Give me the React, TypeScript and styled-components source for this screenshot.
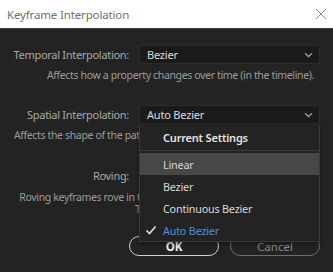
import React from 'react';
import styled, { createGlobalStyle } from 'styled-components';

const GlobalStyle = createGlobalStyle`
  html, body {
    margin: 0;
    padding: 0;
    background: #232323;
  }
  body {
    font-family: "Noto Sans", "Liberation Sans", sans-serif;
  }
`;

const Dialog = styled.div`
  width: 333px;
  height: 272px;
  display: flex;
  flex-direction: column;
  background: #232323;
  overflow: hidden;
  position: relative;
`;

const TitleBar = styled.div`
  height: 29px;
  flex: none;
  display: flex;
  align-items: center;
  justify-content: space-between;
  padding: 0 6px 0 7px;
  background: #ffffff;
  border-bottom: 1px solid #3a3a3a;
  box-sizing: border-box;
`;

const Title = styled.span`
  font-size: 11.5px;
  color: #707070;
  letter-spacing: -0.15px;
`;

const Body = styled.div`
  position: relative;
  flex: 1;
  padding-top: 16px;
  display: flex;
  flex-direction: column;
`;

const Row = styled.div<{ $top?: number }>`
  display: grid;
  grid-template-columns: 129px 181px;
  column-gap: 10px;
  align-items: center;
  margin-top: ${({ $top }) => $top ?? 0}px;
  height: 19px;
`;

const Label = styled.span`
  text-align: right;
  font-size: 11px;
  color: #a8a8a8;
  letter-spacing: -0.3px;
  white-space: nowrap;
`;

const Select = styled.div`
  height: 19px;
  box-sizing: border-box;
  background: #1a1a1a;
  border: 1px solid #2c2c2c;
  border-radius: 2px;
  display: flex;
  align-items: center;
  justify-content: space-between;
  padding: 0 6px 0 7px;
  font-size: 11px;
  color: #dcdcdc;
  letter-spacing: -0.2px;
`;

const Description = styled.div<{ $align: 'right' | 'center'; $right?: number; $top?: number }>`
  font-size: 10.5px;
  color: #9c9c9c;
  letter-spacing: -0.35px;
  text-align: ${({ $align }) => $align};
  padding-right: ${({ $right }) => $right ?? 0}px;
  margin-top: ${({ $top }) => $top ?? 0}px;
  line-height: 12px;
  white-space: nowrap;
`;

const Checkbox = styled.div`
  width: 12px;
  height: 12px;
  border: 1px solid #777;
  border-radius: 2px;
`;

const Buttons = styled.div`
  display: flex;
  gap: 11px;
  margin-top: 21px;
  padding-left: 129px;
`;

const Button = styled.div<{ $primary?: boolean }>`
  width: 90px;
  height: 20px;
  box-sizing: border-box;
  border-radius: 10px;
  border: 1.5px solid ${({ $primary }) => ($primary ? '#d0d0d0' : '#6e6e6e')};
  display: flex;
  align-items: center;
  justify-content: center;
  font-size: 11.5px;
  font-weight: ${({ $primary }) => ($primary ? 700 : 400)};
  color: ${({ $primary }) => ($primary ? '#f0f0f0' : '#8a8a8a')};
`;

const Menu = styled.div`
  position: absolute;
  left: 139px;
  top: 96px;
  width: 181px;
  height: 117px;
  box-sizing: border-box;
  background: #232323;
  border: 1px solid #3a3a3a;
  border-top: none;
  padding-top: 1px;
  display: flex;
  flex-direction: column;
  box-shadow: 0 2px 4px rgba(0, 0, 0, 0.4);
`;

const MenuItem = styled.div<{ $active?: boolean; $checked?: boolean; $header?: boolean }>`
  height: 22px;
  display: flex;
  align-items: center;
  padding-left: 23px;
  position: relative;
  font-size: ${({ $header }) => ($header ? '11px' : '10.8px')};
  font-weight: ${({ $header }) => ($header ? 600 : 400)};
  letter-spacing: -0.2px;
  color: ${({ $checked, $header }) => ($checked ? '#4a8fe0' : $header ? '#e4e4e4' : '#d8d8d8')};
  background: ${({ $active }) => ($active ? '#474747' : 'transparent')};
`;

const Separator = styled.div`
  height: 1px;
  background: #3a3a3a;
  margin: 2px 0 2px;
`;

const Check = styled.svg`
  position: absolute;
  left: 5px;
  top: 6px;
`;

const Chevron = () => (
  <svg width="9" height="6" viewBox="0 0 9 6">
    <path d="M1 1.2 L4.5 4.5 L8 1.2" fill="none" stroke="#9a9a9a" strokeWidth="1.3" />
  </svg>
);

const CloseIcon = () => (
  <svg width="12" height="12" viewBox="0 0 12 12">
    <path d="M1 1 L11 11 M11 1 L1 11" stroke="#8a8a8a" strokeWidth="1" />
  </svg>
);

export default function App() {
  return (
    <>
      <GlobalStyle />
      <Dialog>
        <TitleBar>
          <Title>Keyframe Interpolation</Title>
          <CloseIcon />
        </TitleBar>
        <Body>
          <Row>
            <Label>Temporal Interpolation:</Label>
            <Select>
              <span>Bezier</span>
              <Chevron />
            </Select>
          </Row>
          <Description $align="right" $right={19} $top={5}>
            Affects how a property changes over time (in the timeline).
          </Description>
          <Row $top={24}>
            <Label>Spatial Interpolation:</Label>
            <Select>
              <span>Auto Bezier</span>
              <Chevron />
            </Select>
          </Row>
          <Description $align="center" $top={5}>
            Affects the shape of the path of motion (in the Composition panel).
          </Description>
          <Row $top={25}>
            <Label>Roving:</Label>
            <Checkbox />
          </Row>
          <Description $align="center" $top={6}>
            Roving keyframes rove in time to create a smooth velocity curve.
            <br />
            This is spatial.
          </Description>
          <Buttons>
            <Button $primary>OK</Button>
            <Button>Cancel</Button>
          </Buttons>
          <Menu>
            <MenuItem $header>Current Settings</MenuItem>
            <Separator />
            <MenuItem $active>Linear</MenuItem>
            <MenuItem>Bezier</MenuItem>
            <MenuItem>Continuous Bezier</MenuItem>
            <MenuItem $checked>
              <Check width="12" height="10" viewBox="0 0 12 10">
                <path d="M1.5 5.5 L4.5 8.5 L10.5 1.5" fill="none" stroke="#e0e0e0" strokeWidth="1.6" />
              </Check>
              Auto Bezier
            </MenuItem>
          </Menu>
        </Body>
      </Dialog>
    </>
  );
}
